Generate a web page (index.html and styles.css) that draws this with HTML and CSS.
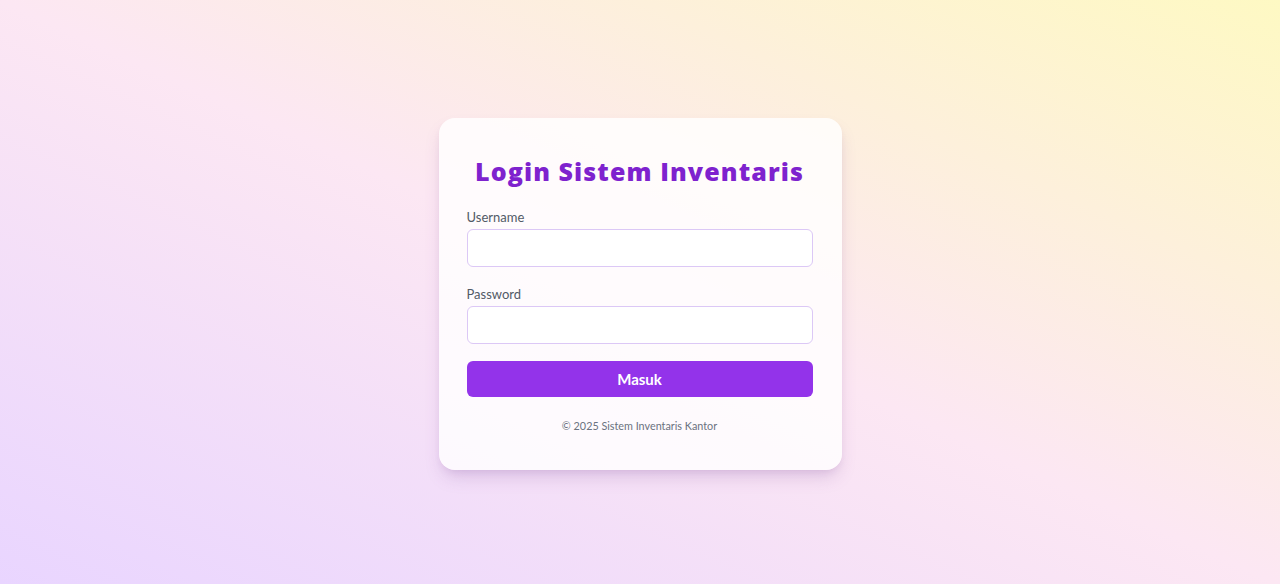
FILE: index.html
```html
<!DOCTYPE html>
<html lang="id">
<head>
<meta charset="utf-8">
<title>Login Sistem Inventaris</title>
<link rel="stylesheet" href="styles.css">
</head>
<body>
<main class="page">
  <form class="card">
    <h1 class="title">Login Sistem Inventaris</h1>
    <div class="field">
      <label class="label" for="username">Username</label>
      <input class="input" id="username" type="text">
    </div>
    <div class="field">
      <label class="label" for="password">Password</label>
      <input class="input" id="password" type="password">
    </div>
    <button class="btn" type="button">Masuk</button>
    <p class="footer">© 2025 Sistem Inventaris Kantor</p>
  </form>
</main>
</body>
</html>
```

FILE: styles.css
```css
* { box-sizing: border-box; }
html, body { margin: 0; padding: 0; height: 100%; }
body {
  font-family: "Lato", "Noto Sans", sans-serif;
  background: linear-gradient(to top right, #e9d5ff 0%, #fce7f3 50%, #fef9c3 100%);
}
.page {
  min-height: 100%;
  display: flex;
  align-items: center;
  justify-content: center;
}
.card {
  width: 403px;
  background: rgba(255, 255, 255, 0.82);
  border-radius: 16px;
  padding: 34px 29px 36px 28px;
  box-shadow: 0 10px 18px -4px rgba(120, 70, 150, 0.22), 0 4px 8px -4px rgba(120, 70, 150, 0.15);
  margin-top: 3px;
}
.title {
  margin: 0 0 16px;
  text-align: center;
  font-family: "Open Sans", sans-serif;
  font-weight: 800;
  font-size: 25px;
  line-height: 39px;
  color: #7e22ce;
  letter-spacing: 1.1px;
}
.field { display: flex; flex-direction: column; margin-bottom: 17px; }
.label {
  font-size: 13px;
  line-height: 20px;
  color: #525a66;
  margin-bottom: 2px;
}
.input {
  height: 38px;
  border: 1px solid #dcc8f6;
  border-radius: 6px;
  background: #fff;
  padding: 0 10px;
  font: inherit;
}
.btn {
  display: block;
  width: 100%;
  height: 36px;
  border: 0;
  border-radius: 6px;
  background: #9333ea;
  color: #fff;
  font-family: "Lato", sans-serif;
  font-weight: 700;
  font-size: 15px;
  cursor: pointer;
}
.footer {
  margin: 21px 0 0;
  text-align: center;
  font-size: 10.8px;
  line-height: 16px;
  color: #6b7280;
}
```
